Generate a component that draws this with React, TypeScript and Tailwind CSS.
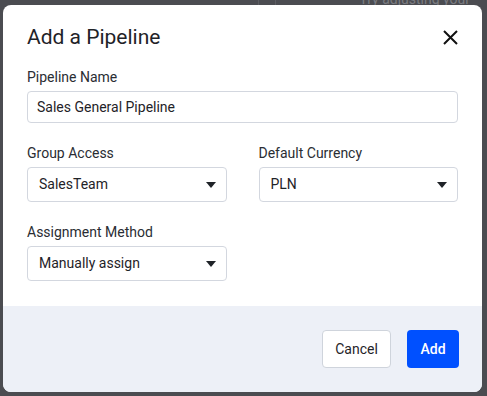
import { useState } from "react";

const font = { fontFamily: '"Roboto", "Noto Sans", Arial, sans-serif' };

function Caret() {
  return (
    <svg width="10" height="6" viewBox="0 0 10 6" className="shrink-0">
      <path d="M0 0 H10 L5 6 Z" fill="#1f2328" />
    </svg>
  );
}

function SelectBox({ value }: { value: string }) {
  return (
    <div className="flex h-[35px] items-center justify-between rounded-[4px] border border-[#d3d7df] bg-white pl-[11px] pr-[10px] text-[14px] text-[#1f2328]">
      <span>{value}</span>
      <Caret />
    </div>
  );
}

function Field({ label, children }: { label: string; children: React.ReactNode }) {
  return (
    <div className="flex flex-col gap-[4px]">
      <label className="text-[14px] leading-[20px] text-[#2a2d33]">{label}</label>
      {children}
    </div>
  );
}

export default function App() {
  const [name, setName] = useState("Sales General Pipeline");

  return (
    <div style={font} className="relative h-[396px] w-[487px] overflow-hidden bg-[#4b4c51] pb-[4px] pl-[3px] pr-[5px] pt-[5px]">
      {/* faded page behind the overlay */}
      <div className="absolute left-[258px] top-0 h-[5px] w-px bg-[#5c5d62]" />
      <div className="absolute left-[275px] top-0 h-[5px] w-px bg-[#5c5d62]" />
      <div className="absolute right-[17px] top-[-11px] text-[14px] leading-[20px] text-[#7a7b80]">Try adjusting your</div>

      <div className="relative flex h-full flex-col overflow-hidden rounded-[8px] bg-white">
        <div className="flex flex-1 flex-col px-6 pt-[18px]">
          <div className="flex items-center justify-between">
            <h2 className="text-[21px] leading-[28px] text-[#1f2328]">Add a Pipeline</h2>
            <button className="flex h-[16px] w-[16px] items-center justify-center">
              <svg width="15" height="15" viewBox="0 0 15 15">
                <path d="M1 1 L14 14 M14 1 L1 14" stroke="#111" strokeWidth="2" />
              </svg>
            </button>
          </div>

          <div className="mt-[16px] flex flex-col gap-[20px]">
            <Field label="Pipeline Name">
              <input
                value={name}
                onChange={(e) => setName(e.target.value)}
                className="h-[32px] rounded-[4px] border border-[#d3d7df] px-[9px] text-[14px] text-[#1f2328] outline-none"
              />
            </Field>
            <div className="grid grid-cols-2 gap-[32px]">
              <Field label="Group Access">
                <SelectBox value="SalesTeam" />
              </Field>
              <Field label="Default Currency">
                <SelectBox value="PLN" />
              </Field>
            </div>
            <div className="grid grid-cols-2 gap-[32px]">
              <Field label="Assignment Method">
                <SelectBox value="Manually assign" />
              </Field>
            </div>
          </div>
        </div>

        <div className="flex h-[86px] items-center justify-end gap-[16px] bg-[#edf0f7] pr-[23px]">
          <button className="h-[38px] w-[69px] rounded-[4px] border border-[#cfd4dc] bg-white text-[14px] text-[#1f2328]">
            Cancel
          </button>
          <button className="h-[38px] w-[52px] rounded-[4px] bg-[#0050ff] text-[14px] font-medium text-white">
            Add
          </button>
        </div>
      </div>
    </div>
  );
}
